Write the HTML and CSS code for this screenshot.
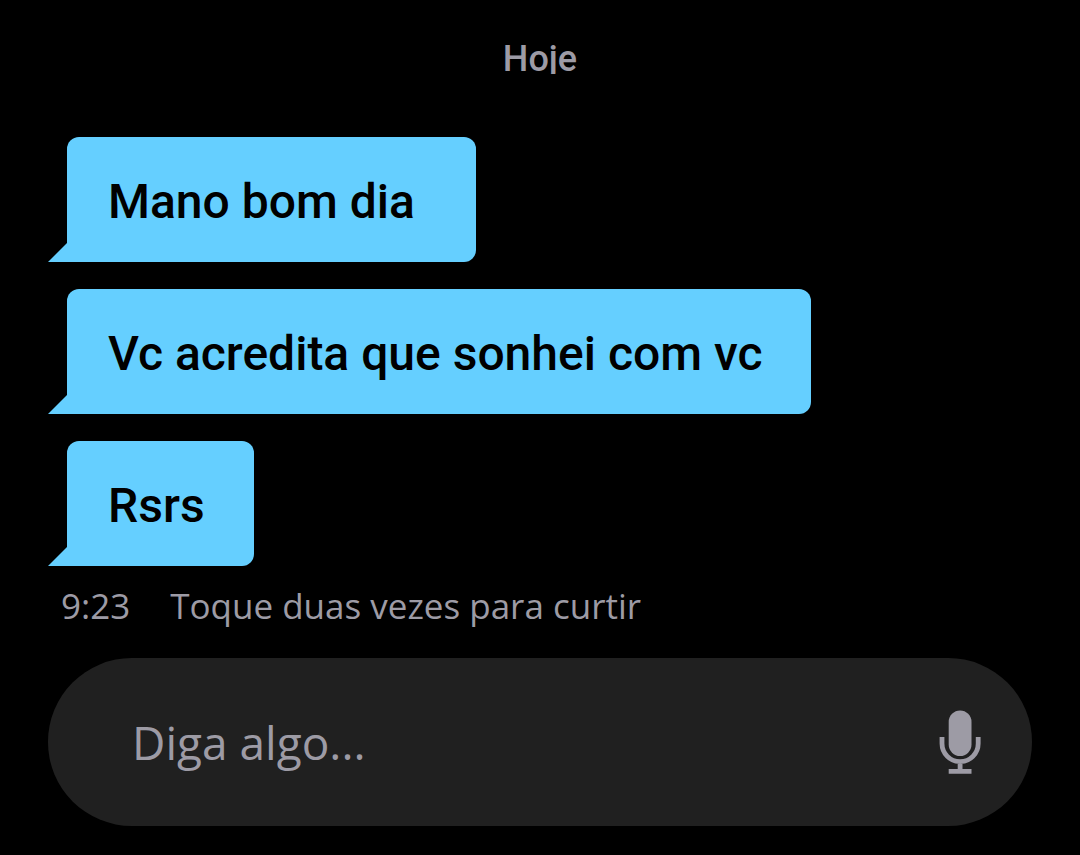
FILE: index.html
```html
<!DOCTYPE html>
<html lang="pt-BR">

<head>
    <meta charset="UTF-8">
    <meta name="viewport" content="width=device-width, initial-scale=1.0">
    <title>Conversa</title>
    <link rel="stylesheet" href="styles.css">
</head>

<body>
    <main class="chat">
        <h1 class="day">Hoje</h1>

        <div class="messages">
            <p class="bubble">Mano bom dia&nbsp;</p>
            <p class="bubble">Vc acredita que sonhei com vc</p>
            <p class="bubble">Rsrs</p>
        </div>

        <div class="meta">
            <time datetime="09:23">9:23</time>
            <span>Toque duas vezes para curtir</span>
        </div>

        <form class="composer">
            <input class="composer-input" type="text" placeholder="Diga algo..." aria-label="Diga algo">
            <button class="mic" type="button" aria-label="Gravar áudio">
                <svg viewBox="0 0 42 64" width="42" height="64" aria-hidden="true">
                    <rect x="9.7" y="0.5" width="22.8" height="45.5" rx="11.4" fill="currentColor" />
                    <path d="M3 27v6.6a18.1 18.1 0 0 0 36.2 0V27M21.1 52v8M9.7 61.3h22.8" fill="none" stroke="currentColor" stroke-width="4.8" />
                </svg>
            </button>
        </form>
    </main>
</body>

</html>
```
FILE: styles.css
```css
* {
    box-sizing: border-box;
}

body {
    margin: 0;
    background-color: #000;
    color: #9d9ba5;
    font-family: Roboto, "Liberation Sans", sans-serif;
}

.chat {
    padding: 37px 48px 28px;
}

.day {
    height: 37px;
    margin: 0 0 63px;
    overflow: hidden;
    font-size: 36px;
    line-height: 44px;
    font-weight: 500;
    text-align: center;
}

.messages {
    display: flex;
    flex-direction: column;
    align-items: flex-start;
    gap: 27px;
    padding-left: 19px;
}

.bubble {
    position: relative;
    margin: 0;
    padding: 35px 49px 30px 41px;
    border-radius: 12px 12px 12px 0;
    background-color: #65cfff;
    color: #000;
    font-size: 48px;
    line-height: 60px;
    font-weight: 500;
}

/* bubble tail */
.bubble::before {
    content: "";
    position: absolute;
    left: -19px;
    bottom: 0;
    width: 20px;
    height: 20px;
    background-color: #65cfff;
    clip-path: polygon(100% 0, 100% 100%, 0 100%);
}

.meta {
    display: flex;
    gap: 40px;
    padding: 16px 13px 28px;
    font-family: "Open Sans", "Noto Sans", sans-serif;
    font-size: 35px;
    line-height: 48px;
}

.composer {
    display: flex;
    align-items: center;
    height: 168px;
    padding: 0 51px 0 84px;
    border-radius: 84px;
    background-color: #202020;
}

.composer-input {
    flex: 1;
    min-width: 0;
    padding: 0;
    border: 0;
    outline: 0;
    background: none;
    color: #fff;
    font-family: "Open Sans", "Noto Sans", sans-serif;
    font-size: 46px;
    line-height: 64px;
}

.composer-input::placeholder {
    color: #9d9ba5;
    opacity: 1;
}

.mic {
    display: flex;
    padding: 0;
    border: 0;
    background: none;
    color: #9d9ba5;
    cursor: pointer;
}
```
